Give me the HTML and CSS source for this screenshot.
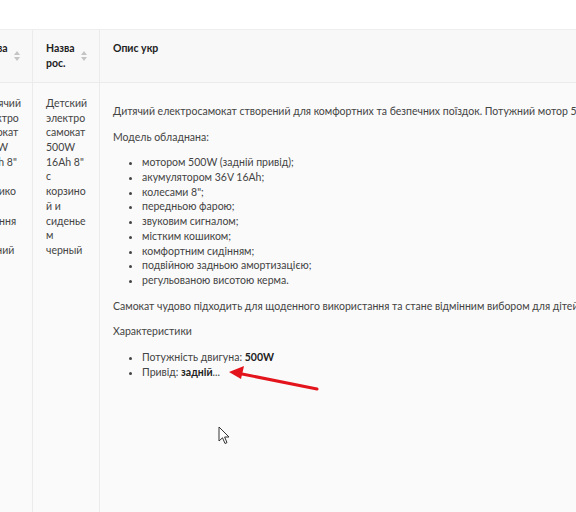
FILE: index.html
```html
<!DOCTYPE html>
<html lang="uk">
<head>
  <meta charset="UTF-8" />
  <meta name="viewport" content="width=device-width, initial-scale=1.0" />
  <title>Товари</title>
  <link rel="stylesheet" href="styles.css">
</head>
<body>

  <div class="topbar"></div>

  <div class="table-wrap">
    <table class="products">
      <thead>
        <tr>
          <th class="col-name">
            <div class="th-inner"><span>Назва укр.</span><span class="sort"></span></div>
          </th>
          <th class="col-name">
            <div class="th-inner"><span>Назва рос.</span><span class="sort"></span></div>
          </th>
          <th class="col-desc">
            <div class="th-inner"><span>Опис укр</span></div>
          </th>
        </tr>
      </thead>
      <tbody>
        <tr>
          <td class="col-name">Дитячий електросамокат 500W 16Ah 8" з кошиком і сидінням чорний</td>
          <td class="col-name">Детский электросамокат 500W 16Ah 8" с корзиной и сиденьем черный</td>
          <td class="col-desc">
            <div class="desc">
              <p>Дитячий електросамокат створений для комфортних та безпечних поїздок. Потужний мотор 500W забезпечує впевнений рух, а ємний акумулятор дозволяє долати великі відстані.</p>
              <p>Модель обладнана:</p>
              <ul>
                <li>мотором 500W (задній привід);</li>
                <li>акумулятором 36V 16Ah;</li>
                <li>колесами 8";</li>
                <li>передньою фарою;</li>
                <li>звуковим сигналом;</li>
                <li>містким кошиком;</li>
                <li>комфортним сидінням;</li>
                <li>подвійною задньою амортизацією;</li>
                <li>регульованою висотою керма.</li>
              </ul>
              <p>Самокат чудово підходить для щоденного використання та стане відмінним вибором для дітей та підлітків.</p>
              <p>Характеристики</p>
              <ul>
                <li>Потужність двигуна: <b>500W</b></li>
                <li>Привід: <b>задній</b>...</li>
              </ul>
            </div>
          </td>
        </tr>
      </tbody>
    </table>
  </div>

  <!-- red pointer arrow -->
  <svg class="mark-arrow" width="100" height="30" viewBox="0 0 100 30">
    <line x1="94" y1="25" x2="14" y2="9" stroke="#e3141c" stroke-width="3" stroke-linecap="round"/>
    <polygon points="6,8 21,2 18,15" fill="#e3141c"/>
  </svg>

  <!-- mouse cursor -->
  <svg class="cursor" width="14" height="20" viewBox="0 0 14 20">
    <path d="M1 1 L1 15 L4.5 11.8 L7 17.5 L9 16.6 L6.6 11 L11 11 Z" fill="#fff" stroke="#333" stroke-width="1" stroke-linejoin="round"/>
  </svg>

</body>
</html>
```

FILE: styles.css
```css
* {
  box-sizing: border-box;
  margin: 0;
  padding: 0;
}
body {
  font-family: Lato, "Noto Sans", sans-serif;
  font-size: 10.5px;
  line-height: 1.4;
  color: #3a3a3a;
  background: #fff;
  width: 576px;
  height: 512px;
  overflow: hidden;
  position: relative;
}

.topbar {
  height: 29px;
  background: #fff;
}

/* Table (scrolled a bit to the right) */
.table-wrap {
  height: 483px;
  overflow: hidden;
  background: #fafafa;
}
.products {
  margin-left: -35px;
  border-collapse: separate;
  border-spacing: 0;
  table-layout: fixed;
  width: 1134px;
  border-top: 1px solid #eeeeee;
}
.products th,
.products td {
  border-left: 1px solid #ebebeb;
  text-align: left;
  vertical-align: top;
}
.col-name {
  width: 67px;
}
.col-desc {
  width: 1000px;
}
.products th {
  height: 53px;
  background: #f8f8f8;
  border-bottom: 1px solid #ebebeb;
  padding: 11px 12px 0 13px;
  font-weight: 700;
  color: #222;
}
.th-inner {
  display: flex;
  align-items: center;
  justify-content: space-between;
  gap: 4px;
}
.sort {
  flex: none;
  display: flex;
  flex-direction: column;
  gap: 2px;
}
.sort::before,
.sort::after {
  content: "";
  border-left: 3px solid transparent;
  border-right: 3px solid transparent;
}
.sort::before {
  border-bottom: 4px solid #c4c4c4;
}
.sort::after {
  border-top: 4px solid #c4c4c4;
}
.products td {
  height: 460px;
  padding: 13px 10px 13px 13px;
  overflow-wrap: anywhere;
  color: #444;
}

/* Description cell */
.desc {
  white-space: nowrap;
}
.desc p,
.desc ul {
  margin: 11px 0;
}
.desc > :first-child {
  margin-top: 8px;
}
.desc ul {
  padding-left: 29px;
}
.desc b {
  color: #222;
}

/* Overlays */
.mark-arrow {
  position: absolute;
  left: 223px;
  top: 364px;
}
.cursor {
  position: absolute;
  left: 218px;
  top: 426px;
}
```
